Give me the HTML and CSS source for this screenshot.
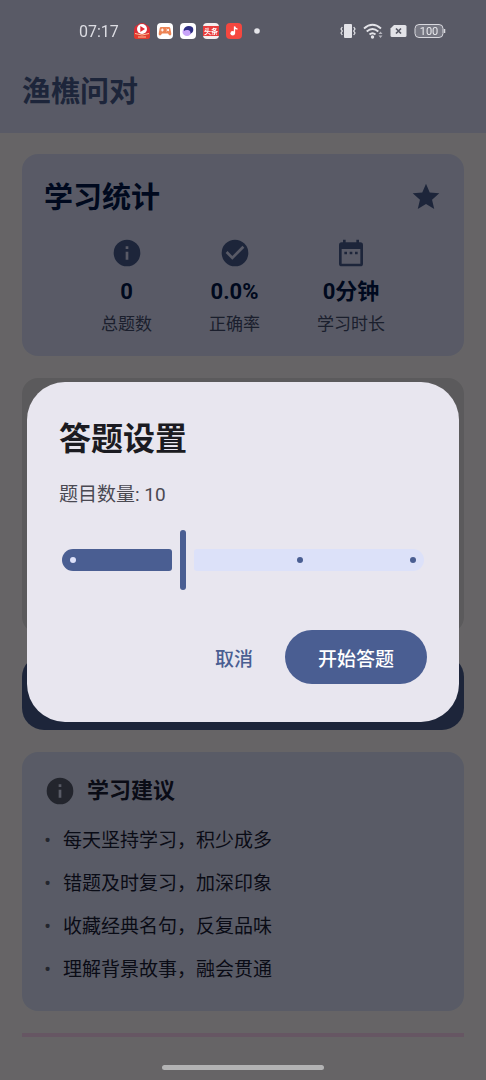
FILE: index.html
```
<!DOCTYPE html>
<html lang="zh-CN">
<head>
<meta charset="utf-8">
<meta name="viewport" content="width=device-width, initial-scale=1">
<title>渔樵问对</title>
<link rel="stylesheet" href="styles.css">
</head>
<body>
<div class="app">
  <header class="app-bar"><h1>渔樵问对</h1></header>
  <main class="home">
    <section class="card stats">
      <div class="stats-head">
        <h2>学习统计</h2>
        <svg class="icon" viewBox="0 0 24 24"><path d="M12 17.27 18.18 21l-1.64-7.03L22 9.24l-7.19-.61L12 2 9.19 8.63 2 9.24l5.46 4.73L5.82 21z"/></svg>
      </div>
      <div class="stats-row">
        <div class="stat">
          <svg class="icon" viewBox="0 0 24 24"><path d="M12 2a10 10 0 1 0 0 20 10 10 0 0 0 0-20zm1 15h-2v-6h2v6zm0-8h-2V7h2v2z"/></svg>
          <strong>0</strong><span>总题数</span>
        </div>
        <div class="stat">
          <svg class="icon" viewBox="0 0 24 24"><path d="M12 2a10 10 0 1 0 0 20 10 10 0 0 0 0-20zm-2 15-5-5 1.41-1.41L10 14.17l7.59-7.59L19 8l-9 9z"/></svg>
          <strong>0.0%</strong><span>正确率</span>
        </div>
        <div class="stat">
          <svg class="icon" viewBox="0 0 24 24"><path d="M9 11H7v2h2v-2zm4 0h-2v2h2v-2zm4 0h-2v2h2v-2zm2-7h-1V2h-2v2H8V2H6v2H5a2 2 0 0 0-2 2v14a2 2 0 0 0 2 2h14a2 2 0 0 0 2-2V6a2 2 0 0 0-2-2zm0 16H5V9h14v11z"/></svg>
          <strong>0分钟</strong><span>学习时长</span>
        </div>
      </div>
    </section>
    <section class="card feature"></section>
    <div class="primary-block"></div>
    <section class="card tips">
      <div class="tips-head">
        <svg class="icon" viewBox="0 0 24 24"><path d="M12 2a10 10 0 1 0 0 20 10 10 0 0 0 0-20zm1 15h-2v-6h2v6zm0-8h-2V7h2v2z"/></svg>
        <h3>学习建议</h3>
      </div>
      <ul>
        <li><span>•</span>每天坚持学习，积少成多</li>
        <li><span>•</span>错题及时复习，加深印象</li>
        <li><span>•</span>收藏经典名句，反复品味</li>
        <li><span>•</span>理解背景故事，融会贯通</li>
      </ul>
    </section>
    <div class="next-card"></div>
  </main>
</div>

<div class="scrim">
  <form class="dialog" role="dialog" aria-labelledby="dialog-title">
    <h2 id="dialog-title">答题设置</h2>
    <label for="count">题目数量: 10</label>
    <div class="slider">
      <div class="track">
        <div class="active"><i></i></div>
        <div></div>
        <div class="inactive"><i></i><i></i></div>
      </div>
      <input id="count" type="range" min="5" max="20" step="5" value="10">
    </div>
    <div class="actions">
      <button type="button" class="text-button">取消</button>
      <button type="button" class="filled-button">开始答题</button>
    </div>
  </form>
</div>

<div class="status-bar">
  <div class="status-left">
    <time>07:17</time>
    <svg viewBox="0 0 16 16"><path d="M8 0q3 0 4.500 2Q16 3 16 8v5q0 3-3 3H3q-3 0-3-3V8q0-5 3.500-6Q5 0 8 0z" fill="#dc2d35"/><circle cx="8" cy="6" r="5" fill="#fff"/><path d="M6.300 3 11 6 6.300 9z" fill="#e32c35"/><path d="M0 9.500Q8 13.500 16 9.500V13q0 3-3 3H3q-3 0-3-3z" fill="#e23b2e"/><path d="M1 10.500Q8 13.500 15 10.500M4 14h8" fill="none" stroke="#ffc39c"/></svg>
    <svg viewBox="0 0 16 16"><rect width="16" height="16" rx="4" fill="#fff"/><path d="M4 4h8q1 0 1.300 1.200l1 5.300q.3 2-1.300 2-1 0-2-2H5q-1 2-2 2-1.600 0-1.300-2l1-5.300Q3 4 4 4z" fill="#ed8455"/><path d="M5.300 5.500v3M3.800 7h3M9.500 6l2.500 2M12 6 9.500 8" stroke="#fff"/></svg>
    <svg viewBox="0 0 16 16"><rect width="16" height="16" rx="4" fill="#fff"/><ellipse cx="7" cy="9" rx="4.500" ry="4" fill="#c9a4f8"/><path d="M3.800 6.500q1-3.500 5-3.500 4.500 0 4.500 3.700 0 2.800-3 4Q11 7.500 8 7 5.500 6.500 4 8z" fill="#303084"/></svg>
    <svg viewBox="0 0 16 16"><rect width="16" height="16" rx="4" fill="#f5eeee"/><path d="M0 3h16v10H0z" fill="#e93c3c"/><text x="8" y="11" text-anchor="middle" class="tiny">头条</text></svg>
    <svg viewBox="0 0 16 16"><rect width="16" height="16" rx="4" fill="#f5473f"/><circle cx="6.700" cy="10.300" r="2.300" fill="#fff"/><path d="M8.500 10.500V3.500q.5 2.200 3 2.600" fill="none" stroke="#fff" stroke-width="1.300"/></svg>
    <svg viewBox="0 0 16 16"><circle cx="8" cy="8" r="2.800" fill="#e5e5ea"/></svg>
  </div>
  <div class="status-right">
    <svg width="16" height="16" viewBox="0 0 16 16"><rect x="4" y="1" width="8" height="14" rx="1" fill="#e3e3e8"/><path d="M2.300 4 1 6l1.300 2L1 10l1.300 2M13.700 4 15 6l-1.300 2L15 10l-1.300 2" fill="none" stroke="#e3e3e8" stroke-width="1.200"/></svg>
    <svg width="20" height="16" viewBox="0 0 20 16"><path d="M1 5.500Q9.500-2 18 5.500M3.700 8.500q5.800-5 11.600 0M6.500 11.500q3-2.500 6 0" fill="none" stroke="#e3e3e8" stroke-width="1.900"/><circle cx="9.500" cy="14" r="1.700" fill="#e3e3e8"/><path d="m17.500 8.500 2 2.500h-4zM17.500 15l2-2.500h-4z" fill="#b5b5bd"/></svg>
    <svg width="17" height="14" viewBox="0 0 17 14"><path d="M4 1h11q1.500 0 1.500 1.500v9q0 1.500-1.500 1.500H2Q.5 13 .5 11.500V4.500z" fill="#e3e3e8"/><path d="m6 4.500 5 5m0-5-5 5" stroke="#575864" stroke-width="1.700"/></svg>
    <svg width="32" height="16" viewBox="0 0 32 16"><rect x="1" y="1.500" width="28" height="13" rx="4" fill="#777883" stroke="#d8d8de"/><path d="M30.500 6v4" stroke="#d8d8de" stroke-width="1.500"/><text x="15" y="12" text-anchor="middle" class="battery">100</text></svg>
  </div>
</div>
<div class="home-indicator"></div>
</body>
</html>
```
FILE: styles.css
```
* { box-sizing: border-box; }

body {
  margin: 0;
  background: #fefbff;
  color: #1b1b21;
  font-family: Roboto, "Noto Sans CJK SC", sans-serif;
  font-size: 19px;
}

h1, h2, h3, ul { margin: 0; padding: 0; }

.app { min-height: 100vh; }

.app-bar {
  padding: 63px 22px 12px;
  background: #dee2ff;
}

.app-bar h1 {
  color: #4a5e92;
  font-size: 29px;
  font-weight: 700;
  line-height: 58px;
}

.home {
  display: flex;
  flex-direction: column;
  gap: 22px;
  padding: 21px 22px 0;
}

.card {
  padding: 22px;
  border-radius: 16px;
}

.icon {
  display: block;
  width: 32px;
  height: 32px;
  fill: #4a5e92;
}

.stats {
  background: #dee2ff;
  color: #00174b;
}

.stats-head {
  display: flex;
  align-items: center;
  justify-content: space-between;
  margin-bottom: 19px;
}

.stats-head h2 {
  padding-top: 2px;
  font-size: 29px;
  line-height: 40px;
}

.stats-row {
  display: flex;
  justify-content: space-evenly;
}

.stat {
  display: flex;
  flex-direction: column;
  align-items: center;
  gap: 8px;
}

.stat strong {
  font-size: 22px;
  line-height: 29px;
}

.stat span {
  color: #454f72;
  font-size: 17px;
  line-height: 20px;
}

.feature {
  min-height: 255px;
  background: #e4e1e6;
}

.primary-block {
  min-height: 75px;
  border-radius: 22px;
  background: #4a5e92;
}

.tips {
  padding-bottom: 20px;
  background: #dee4ff;
  color: #1a2038;
}

.tips-head {
  display: flex;
  align-items: center;
  gap: 11px;
  margin-bottom: 11px;
}

.tips-head h3 {
  font-size: 22px;
  line-height: 34px;
}

.tips .icon { fill: #595e72; }

.tips ul { list-style: none; }

.tips li {
  display: flex;
  line-height: 43px;
}

.tips li span {
  width: 19px;
  color: #595e72;
  font-family: "Open Sans", sans-serif;
}

.next-card {
  height: 4px;
  background: #ffd8f7;
}

.scrim {
  position: fixed;
  inset: 0;
  display: flex;
  align-items: center;
  justify-content: center;
  padding: 24px 27px 0;
  background: rgba(0, 0, 0, 0.6);
}

.dialog {
  width: 100%;
  max-width: 560px;
  padding: 34px 32px 38px;
  border-radius: 38px;
  background: #e8e6ef;
}

.dialog h2 {
  margin-bottom: 19px;
  font-size: 32px;
  line-height: 46px;
}

.dialog label {
  display: block;
  margin-bottom: 21px;
  color: #4a4952;
  line-height: 28px;
}

.slider {
  position: relative;
  display: flex;
  align-items: center;
  height: 60px;
  margin-bottom: 40px;
}

.track {
  display: grid;
  grid-template-columns: 110fr 22px 230fr;
  flex: 1;
  height: 22px;
  margin: 0 3px;
}

.track div {
  display: flex;
  align-items: center;
}

.track i {
  width: 6px;
  height: 6px;
  border-radius: 50%;
  background: #4a5e92;
}

.active {
  padding-left: 8px;
  border-radius: 11px 3px 3px 11px;
  background: #4a5e92;
}

.track .active i { background: #dde1f9; }

.inactive {
  justify-content: flex-end;
  gap: 107px;
  padding-right: 8px;
  border-radius: 3px 11px 11px 3px;
  background: #dce1f9;
}

.slider input {
  position: absolute;
  inset: 0;
  width: 100%;
  height: 60px;
  margin: 0;
  appearance: none;
  background: transparent;
}

.slider input::-webkit-slider-thumb {
  appearance: none;
  width: 6px;
  height: 60px;
  border-radius: 3px;
  background: #4a5e92;
}

.actions {
  display: flex;
  justify-content: flex-end;
  gap: 11px;
}

.actions button {
  height: 54px;
  border: 0;
  border-radius: 27px;
  font: inherit;
  font-weight: 500;
}

.text-button {
  padding: 0 21px;
  background: transparent;
  color: #4a5e92;
}

.filled-button {
  padding: 0 33px;
  background: #4a5e92;
  color: #fff;
}

.status-bar {
  position: fixed;
  top: 0;
  left: 0;
  right: 0;
  display: flex;
  align-items: center;
  justify-content: space-between;
  height: 62px;
  padding: 0 40px 0 79px;
  color: #dcdce2;
}

.status-left, .status-right {
  display: flex;
  align-items: center;
}

.status-left { gap: 7px; }

.status-left time {
  margin-right: 8px;
  font-size: 16px;
}

.status-left svg {
  width: 16px;
  height: 16px;
}

.status-right { gap: 7px; }

.tiny {
  fill: #fff;
  font-size: 7px;
  font-weight: 700;
}

.battery {
  fill: #e8e8ec;
  font-size: 11px;
}

.home-indicator {
  position: fixed;
  bottom: 10px;
  left: 33.333%;
  right: 33.333%;
  height: 5px;
  border-radius: 3px;
  background: #b3b3b4;
}
```
